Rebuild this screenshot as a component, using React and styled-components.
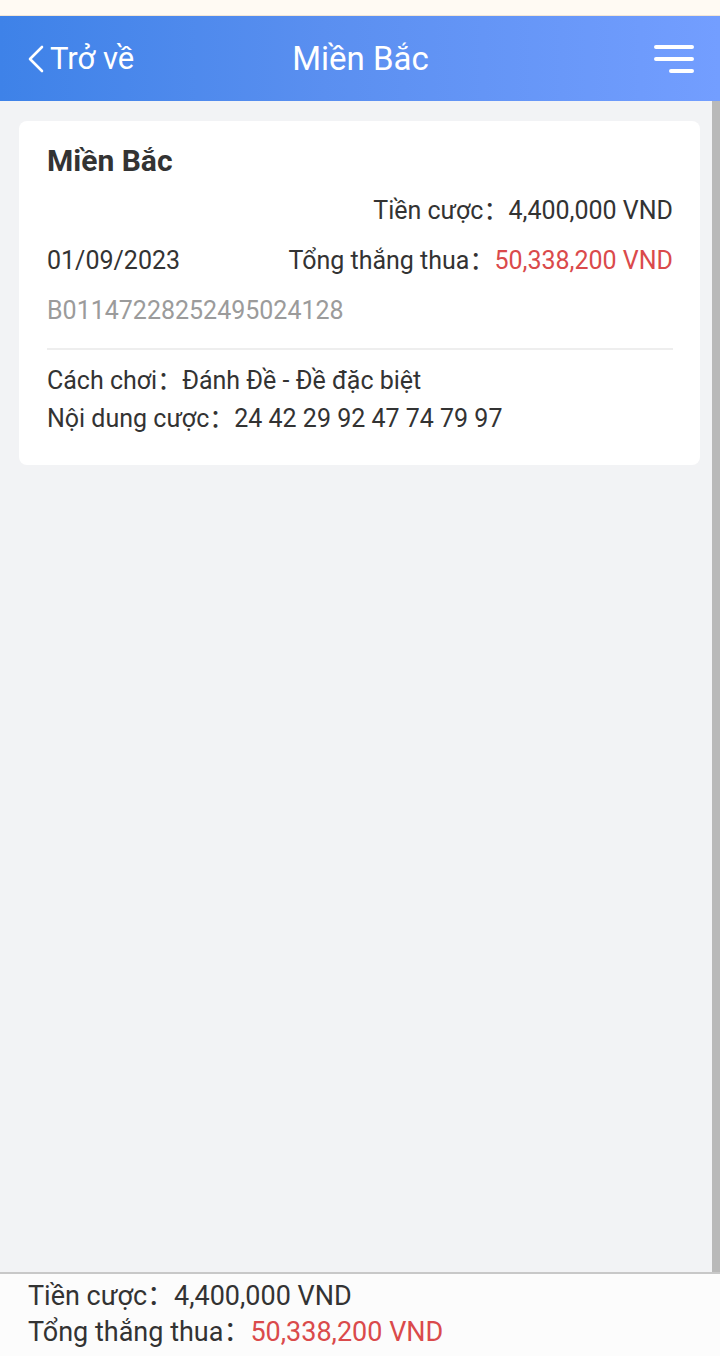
import React from 'react';
import styled, { createGlobalStyle } from 'styled-components';

const GlobalStyle = createGlobalStyle`
  html, body {
    margin: 0;
    padding: 0;
    height: 100%;
  }
  body {
    font-family: Roboto, "Noto Sans CJK SC", "Noto Sans", "Liberation Sans", sans-serif;
    color: #333;
    background: #f2f3f5;
  }
`;

const Page = styled.div`
  display: flex;
  flex-direction: column;
  height: 100vh;
`;

const StatusStrip = styled.div`
  height: 15px;
  background: #fffaf3;
  border-bottom: 1px solid #f3e6d6;
`;

const Header = styled.header`
  height: 85px;
  display: grid;
  grid-template-columns: 1fr auto 1fr;
  align-items: center;
  padding: 0 26px 0 27px;
  background: linear-gradient(90deg, #3e82e8 0%, #5a8ff0 45%, #739eff 100%);
  color: #fff;
`;

const BackLink = styled.a`
  display: flex;
  align-items: center;
  gap: 5px;
  justify-self: start;
  font-size: 31px;
  color: #fff;
  text-decoration: none;
`;

const HeaderTitle = styled.h1`
  margin: 0;
  font-size: 33px;
  font-weight: 400;
`;

const MenuButton = styled.button`
  justify-self: end;
  border: 0;
  background: none;
  padding: 0;
  display: flex;
`;

const Body = styled.div`
  flex: 1;
  display: flex;
  min-height: 0;
`;

const Content = styled.main`
  flex: 1;
  overflow: hidden;
`;

const ScrollRail = styled.div`
  width: 8px;
  background: #b9b9b9;
`;

const Card = styled.section`
  margin: 20px 12px 0 19px;
  padding: 15px 27px 27px 28px;
  background: #fff;
  border-radius: 8px;
`;

const Row = styled.div`
  display: flex;
  justify-content: ${p => p.$justify || 'space-between'};
  align-items: center;
  height: ${p => p.$h || 50}px;
  margin-top: ${p => p.$top || 0}px;
  font-size: 25px;
  line-height: 30px;
  white-space: nowrap;
  color: ${p => p.$muted ? '#9b9b9b' : '#333'};
`;

const CardTitle = styled.h2`
  margin: 0;
  font-size: 30px;
  font-weight: 700;
  color: #333;
`;

const Value = styled.span`
  color: ${p => p.$red ? '#da4a4b' : '#333'};
`;

const Divider = styled.hr`
  margin: 12px 0 0;
  border: 0;
  border-top: 2px solid #eeeeee;
`;

const Footer = styled.footer`
  height: 78px;
  padding: 4px 28px 0;
  background: #fcfcfc;
  border-top: 2px solid #c8c8c8;
`;

const FooterLine = styled.div`
  height: 36px;
  display: flex;
  align-items: center;
  font-size: 27px;
  line-height: 30px;
  color: #333;
  white-space: pre;
`;

const Chevron = () => (
  <svg width="18" height="28" viewBox="0 0 18 28" fill="none">
    <path d="M15 2 L3 14 L15 26" stroke="#fff" strokeWidth="2.6" strokeLinecap="round" strokeLinejoin="round" />
  </svg>
);

const MenuIcon = () => (
  <svg width="40" height="30" viewBox="0 0 40 30" fill="none">
    <path d="M2 3 H38 M2 15 H38 M17 27 H38" stroke="#fff" strokeWidth="4" strokeLinecap="round" />
  </svg>
);

export default function App() {
  return (
    <Page>
      <GlobalStyle />
      <StatusStrip />
      <Header>
        <BackLink href="#">
          <Chevron />
          Trở về
        </BackLink>
        <HeaderTitle>Miền Bắc</HeaderTitle>
        <MenuButton aria-label="menu">
          <MenuIcon />
        </MenuButton>
      </Header>
      <Body>
        <Content>
          <Card>
            <Row>
              <CardTitle>Miền Bắc</CardTitle>
            </Row>
            <Row $justify="flex-end">
              <span>Tiền cược：<Value>4,400,000 VND</Value></span>
            </Row>
            <Row>
              <span>01/09/2023</span>
              <span>Tổng thắng thua：<Value $red>50,338,200 VND</Value></span>
            </Row>
            <Row $muted>B01147228252495024128</Row>
            <Divider />
            <Row $justify="flex-start" $h={38} $top={12}>
              Cách chơi：Đánh Đề - Đề đặc biệt
            </Row>
            <Row $justify="flex-start" $h={38}>
              Nội dung cược：24 42 29 92 47 74 79 97
            </Row>
          </Card>
        </Content>
        <ScrollRail />
      </Body>
      <Footer>
        <FooterLine>Tiền cược：<Value>4,400,000 VND</Value></FooterLine>
        <FooterLine>Tổng thắng thua：<Value $red>50,338,200 VND</Value></FooterLine>
      </Footer>
    </Page>
  );
}
